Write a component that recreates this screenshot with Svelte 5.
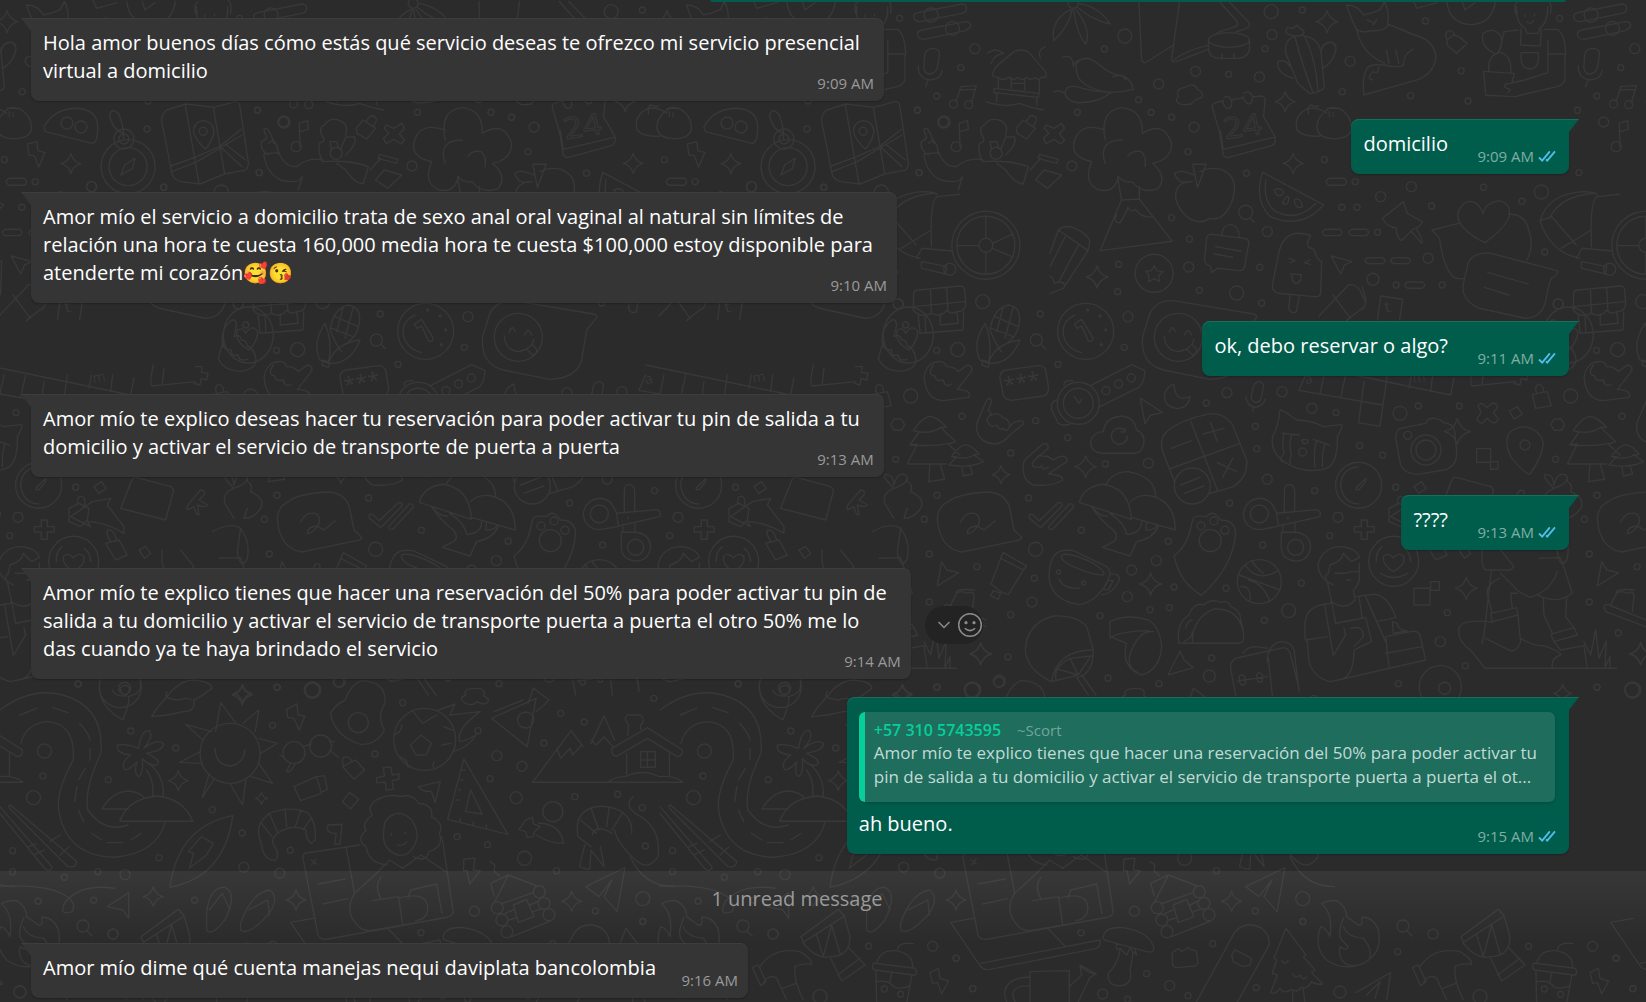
<script lang="ts">
    type Message = {
        id: number;
        out?: boolean;
        lines: string[];
        time: string;
        quote?: { phone: string; name: string; text: string };
        hovered?: boolean;
    };

    type Word = { x: number; y: number; size: number; text: string; outline?: boolean };

    type Sheet = {
        x: number;
        y: number;
        sx: number;
        sy: number;
        dots: number[][];
        stars: number[][];
        paths: string[];
        words?: Word[];
    };

    const messages: Message[] = [
        {
            id: 1,
            lines: [
                "Hola amor buenos días cómo estás qué servicio deseas te ofrezco mi servicio presencial",
                "virtual a domicilio",
            ],
            time: "9:09 AM",
        },
        { id: 2, out: true, lines: ["domicilio"], time: "9:09 AM" },
        {
            id: 3,
            lines: [
                "Amor mío el servicio a domicilio trata de sexo anal oral vaginal al natural sin límites de",
                "relación una hora te cuesta 160,000 media hora te cuesta $100,000 estoy disponible para",
                "atenderte mi corazón🥰😘",
            ],
            time: "9:10 AM",
        },
        { id: 4, out: true, lines: ["ok, debo reservar o algo?"], time: "9:11 AM" },
        {
            id: 5,
            lines: [
                "Amor mío te explico deseas hacer tu reservación para poder activar tu pin de salida a tu",
                "domicilio y activar el servicio de transporte de puerta a puerta",
            ],
            time: "9:13 AM",
        },
        { id: 6, out: true, lines: ["????"], time: "9:13 AM" },
        {
            id: 7,
            lines: [
                "Amor mío te explico tienes que hacer una reservación del 50% para poder activar tu pin de",
                "salida a tu domicilio y activar el servicio de transporte puerta a puerta el otro 50% me lo",
                "das cuando ya te haya brindado el servicio",
            ],
            time: "9:14 AM",
            hovered: true,
        },
        {
            id: 8,
            out: true,
            lines: ["ah bueno."],
            time: "9:15 AM",
            quote: {
                phone: "+57 310 5743595",
                name: "~Scort",
                text: "Amor mío te explico tienes que hacer una reservación del 50% para poder activar tu\npin de salida a tu domicilio y activar el servicio de transporte puerta a puerta el ot...",
            },
        },
    ];

    const unread: Message[] = [
        {
            id: 9,
            lines: ["Amor mío dime qué cuenta manejas nequi daviplata bancolombia"],
            time: "9:16 AM",
        },
    ];

    // wallpaper repeats sideways
    const tileWidth = 660;
    const tiles = [-2, -1, 0, 1];

    const sheets: Sheet[] = [
        {
            x: 1050,
            y: 0,
            sx: 0.38,
            sy: 0.3333,
            dots: [[61,10,5],[143,147,3],[197,108,7],[582,35,7],[664,30,3],[584,104,5],[566,146,3],[790,184,5],[383,214,5],[470,223,3],[551,231,5],[286,252,5],[233,299,3],[769,275,3],[72,337,3],[266,337,3],[320,352,3],[379,382,5],[363,455,3],[517,520,3],[722,479,3],[803,545,3],[768,622,3],[808,622,3],[870,590,5],[951,560,5],[1004,618,3],[1141,562,3],[1293,576,7],[1242,604,3],[1392,518,3],[1457,366,5],[1388,331,3],[1439,288,3],[1502,203,3],[1539,146,5],[1341,55,3],[988,63,3],[1082,212,3],[949,287,3],[1100,303,3],[320,653,3],[367,717,3],[572,695,5],[862,697,3],[995,775,5],[850,838,6],[911,855,3],[1032,855,3],[552,802,3],[557,909,3],[181,793,3],[365,801,5],[178,875,3],[393,871,3],[491,879,7],[1302,756,3],[1337,912,5],[1424,45,7],[1480,85,7],[1483,312,4],[1523,314,4],[1490,440,5],[515,637,7],[274,820,19],[1473,808,6],[1568,736,34],[1568,736,29],[1568,736,7]],
            stars: [[729,65,11],[619,305,10],[640,490,10],[124,831,11]],
            paths: [
                "M55 28Q0 60 10 122Q50 80 58 30M62 30Q70 100 94 133Q110 90 68 28M72 22Q110 60 158 72Q130 20 75 10",
                "M234 4L241 180Q245 192 254 186L325 135M341 4L320 176Q320 190 334 184L416 148M445 4L493 65Q497 78 482 82L440 98M470 4L522 65Q530 78 515 86L490 96M325 180Q360 150 416 136",
                "M417 120A54 22 0 0 1 525 120A54 22 0 0 1 417 120V150Q420 175 450 175H495Q520 172 525 150V120M452 175V160M484 175V160",
                "M75 232Q60 190 80 180Q100 165 130 195Q160 225 192 228Q215 240 219 268Q150 290 100 258Q80 245 75 232M33 172Q60 160 62 200M62 200Q60 180 100 175M40 280Q40 255 70 260Q110 275 160 277Q130 310 70 308Q40 300 40 280M10 276Q25 268 40 280M165 230Q195 220 198 240",
                "M345 313Q325 305 338 288Q330 265 355 262Q380 245 388 268Q405 275 400 293Q375 300 372 312Q355 315 345 313",
                "M455 303L437 308Q425 312 427 322L447 400L455 460Q458 475 470 472L585 436Q595 430 592 410L562 350L566 300Q565 288 552 288L532 291M480 299L508 294M448 392L456 448L590 412M458 292Q470 285 477 300Q482 325 468 326Q455 320 455 300M510 280Q525 270 532 287Q535 312 522 312Q510 305 508 290",
                "M650 390Q640 345 680 325H700Q720 330 728 340M650 390Q665 412 710 408M735 325H760Q795 345 793 390Q785 418 745 416Q705 415 702 380Q705 345 735 325M678 325L685 315L700 320L706 318M730 325L745 322L758 325M735 335V350M745 338V350M680 328V342",
                "M652 250L620 158Q615 110 660 106Q715 110 715 180L722 262Q715 275 684 281L652 250M644 108Q665 200 692 278M670 108Q700 180 705 270M648 108Q610 105 625 82Q640 90 650 75Q660 90 668 92Q670 105 655 108M715 150Q715 130 740 126Q760 135 748 165Q740 190 718 205M640 235Q595 220 600 185Q620 175 632 200",
                "M880 190Q820 160 808 92L795 60L780 15Q810 15 825 45Q850 40 870 28L880 4Q895 40 888 72L960 105Q1010 120 1016 170Q1010 230 950 245L826 285Q820 230 835 203Q850 190 880 195Q920 205 930 195Q930 160 955 148M808 90Q825 100 845 92Q870 95 890 78M850 240Q830 235 850 215Q865 225 865 200M918 190L910 150M835 60L850 68M860 58L850 75M885 150L892 190",
                "M1045 120L1062 105L1078 112L1098 130L1070 160L1045 135ZM1045 120Q1035 100 1050 92Q1060 92 1065 104",
                "M1044 4Q1050 70 1108 74Q1165 70 1172 4M1085 4L1092 30L1118 8M955 0L965 25L1018 8",
                "M1228 20Q1225 70 1250 85L1255 100H1285L1288 85Q1310 70 1310 20M1225 40Q1220 10 1232 5M1317 40Q1322 10 1310 0M1240 85L1238 135L1290 138L1293 88M1232 90L1195 95L1183 150M1300 88H1335Q1355 100 1357 162L1310 162M1355 165V240Q1350 255 1335 260L1250 282L1225 290L1147 286L1141 214L1222 220L1215 250M1310 120V218L1250 240L1200 252Q1190 265 1212 268L1205 278M1240 158L1285 158Q1290 205 1262 207Q1235 205 1240 158M1155 214Q1150 165 1185 157Q1215 165 1213 218M1170 160Q1130 140 1140 100Q1165 80 1185 105Q1195 130 1180 155M1250 45V50M1275 42V48M1255 65Q1265 75 1273 62",
                "M1378 50Q1378 40 1390 38L1505 12Q1520 12 1517 28Q1515 38 1505 40L1395 65Q1380 65 1378 50M1388 105Q1388 92 1400 90L1515 65Q1530 65 1528 80L1515 92L1405 118Q1390 118 1388 105",
                "M1407 165Q1410 145 1430 145Q1448 148 1446 165L1440 205Q1435 222 1418 222Q1405 218 1405 200ZM1390 198Q1390 235 1420 240Q1450 238 1453 212M1415 242L1410 260",
                "M1490 305L1502 260L1543 257L1530 308M1500 270L1541 268M1500 440L1498 370L1520 362L1522 388L1500 395",
                "M145 420Q130 330 190 323Q245 330 243 400Q300 360 320 430Q320 480 270 490Q310 530 285 565Q245 585 215 545Q195 550 180 530Q170 580 130 570Q85 550 110 485Q50 470 65 420Q80 365 145 390M145 490Q125 420 190 420M205 470Q215 450 240 455Q255 470 250 500",
                "M178 530L188 600L132 752L322 724L235 597V560M188 600L235 597M175 645Q165 670 185 668Q200 640 205 622Q215 640 225 628Q240 655 272 650",
                "M395 515Q420 500 450 508Q500 530 480 600Q460 665 420 655Q390 680 355 645Q320 600 335 565Q345 545 375 545M328 522Q340 505 378 525M328 522Q340 555 365 545M376 493H411L388 563Z",
                "M560 517Q535 600 580 650Q660 690 720 615L560 517M568 540Q560 600 590 632Q650 670 700 610M590 570Q610 560 615 578Q600 600 590 570M612 610Q620 585 628 590Q630 620 612 610M643 600Q660 590 665 620Q645 630 643 600",
                "M735 535H775Q785 545 775 556H735Q718 545 735 535M725 688H762Q775 697 762 707H725Q708 697 725 688M795 688H832Q845 697 832 707H795Q778 697 795 688M838 773H875Q888 782 875 791H838Q820 782 838 773M905 773H942Q955 782 942 791H905Q888 782 905 773M942 846H980Q992 855 980 865H942Q925 855 942 846",
                "M425 703L515 716Q524 720 523 730L512 800Q510 812 500 812L440 805L425 817L422 798Q408 795 407 780L412 715Q415 703 425 703M452 703Q455 672 478 674Q498 680 498 713M436 740L502 754M432 762L480 772M526 655L538 667",
                "M600 770Q610 700 655 700Q680 702 686 708Q670 735 685 745Q695 740 698 760Q705 780 715 785L712 880Q710 892 695 890L600 880Q585 875 585 855ZM632 885L628 925Q632 942 648 936L656 890M630 775L645 782L632 788M685 780L670 788L685 793M632 822L662 824M637 824Q635 850 650 850Q662 845 660 826",
                "M740 768L795 785L775 795L765 822Z",
                "M274 797L281 812L298 815L286 827L288 845L274 836L260 845L260 826L252 814L267 812Z",
                "M0 760L22 690Q35 675 60 682Q100 700 105 725L100 752L35 865L0 880M22 690L100 752M0 800L40 710M22 848L75 735M0 828Q10 835 12 850Q30 840 40 855",
                "M1140 640Q1120 590 1090 610Q1060 640 1085 680Q1110 710 1145 728Q1190 690 1205 660Q1220 610 1180 602Q1145 610 1140 640M1075 670L1005 690L1025 715Q1035 800 1060 830Q1075 840 1088 835M1207 643Q1250 640 1260 690Q1275 740 1255 780M1100 790Q1115 755 1160 760L1335 812Q1340 822 1320 835Q1310 860 1305 900Q1295 955 1250 955L1130 925Q1080 900 1088 850ZM1152 817L1258 852M1143 862L1208 885",
                "M875 655L930 605L940 640L980 665Q975 680 955 688L925 722Q910 710 912 685Q885 680 875 655M950 693L978 730Q985 725 965 688",
                "M708 948L785 855Q800 850 815 870L830 905Q830 925 815 930L780 962M822 862L832 900M745 885L790 955M862 960L870 888L928 898L920 960",
                "M1290 662Q1310 580 1405 575Q1430 575 1440 583M1315 655Q1340 590 1430 580M1425 740Q1420 600 1440 590L1500 583M1345 745L1420 693M1290 662L1320 650L1385 735M1290 665Q1320 760 1395 775M1385 775L1400 745L1480 753M1400 785L1465 800L1462 822L1400 805Q1395 795 1400 785M1568 714V650M1568 757V822M1549 737H1492M1585 730L1640 702M1585 745L1640 772",
                "M1378 880Q1378 870 1390 870L1500 858Q1512 858 1512 870L1515 910Q1515 935 1492 935Q1475 945 1465 930Q1450 955 1425 940Q1395 955 1377 930ZM1378 920L1512 905M1422 868L1425 940M1465 863L1468 930M1390 945L1395 1000L1508 990L1510 935M1408 947L1410 998M1448 942V975L1495 970L1492 938",
            ],
            words: [
                { x: 462, y: 418, size: 88, text: "24", outline: true },
                { x: 882, y: 938, size: 48, text: "t" },
            ],
        },
        {
            x: 0,
            y: 0,
            sx: 0.3509,
            sy: 0.3333,
            dots: [[365,500,27],[365,500,19],[353,417,5],[353,417,10],[191,369,6],[231,381,6],[579,394,4],[958,460,6],[419,387,3],[809,366,6],[734,331,3],[739,518,3],[261,560,5],[467,562,3],[1174,498,5]],
            stars: [[202,491,10]],
            paths: [
                "M350 400Q320 390 312 345Q320 320 340 345Q355 390 352 415M345 525L355 495L385 475L378 505Z",
                "M475 330L530 312L610 322L670 305Q680 305 683 315L708 490Q705 515 690 512L640 522L570 552L515 545Q495 540 490 520L460 360Q462 340 475 330M528 314L567 550M608 322L640 520M488 498L560 470L625 440L688 388M490 515L562 485L690 405M628 440L690 500M645 435L700 480M585 447Q548 410 552 385Q560 362 580 362Q608 365 610 395Q605 425 585 447",
                "M125 382Q150 330 210 325Q275 325 278 375Q280 430 262 430L130 395Z",
                "M78 432L105 425L108 452L128 458L110 502L98 467L82 465Z",
                "M765 465Q740 450 745 425L760 415L752 390Q758 375 770 400L778 420Q795 440 792 462M765 430Q780 415 780 430M752 462L795 458Q810 500 845 500Q880 470 920 480M752 465Q760 520 800 540Q840 550 855 540L862 530L850 570M920 485Q905 460 910 430Q930 425 920 410Q905 385 925 375Q940 350 970 362Q995 375 985 405M1050 500Q1000 480 920 485M960 490L985 510Q1010 550 1035 552L1050 500M945 450L940 425L960 425L965 445M970 450L985 412L1010 410Q1020 430 985 465",
                "M1100 375L1123 385L1145 370L1153 385L1138 402L1153 420L1143 432L1123 418L1100 430L1093 415L1108 400L1095 385Z",
                "M1015 385L1035 360L1070 385L1045 417L1018 400ZM1045 362L1055 348Q1070 345 1073 360L1065 378",
                "M1082 463L1135 478L1130 490L1078 475ZM1055 510L1085 475M1070 540L1095 510L1145 525L1105 565Z",
            ],
        },
        {
            x: 500,
            y: 0,
            sx: 0.3509,
            sy: 0.3333,
            dots: [],
            stars: [],
            paths: [
                "M1405 230Q1400 210 1430 185L1465 155Q1485 145 1505 155L1555 215Q1560 240 1545 230Q1535 245 1525 232Q1515 245 1500 232Q1490 245 1475 232Q1460 245 1450 232Q1430 245 1420 232ZM1408 265L1535 280V292L1408 278ZM1420 235V265M1537 240V280M1415 282V305M1530 292V315M1390 160Q1410 140 1435 160Q1405 165 1400 190M1540 175Q1530 150 1555 140M1385 305Q1440 325 1480 310Q1520 325 1550 330M1457 230V265M1495 235V270M1457 250H1495",
            ],
        },
        {
            x: 880,
            y: 300,
            sx: 0.3333,
            sy: 0.3333,
            dots: [[55,12,5],[481,42,3],[744,50,5],[308,5,7],[77,75,3],[170,151,3],[233,149,7],[534,193,3],[733,142,3],[92,288,7],[246,349,3],[467,362,3],[563,413,3],[47,478,3],[392,459,3],[676,492,3],[805,490,5],[171,586,3],[446,594,3],[133,658,3],[604,691,3],[467,748,7],[148,762,3],[291,800,3],[463,835,3],[456,906,5],[148,906,3],[829,782,5],[755,810,5],[742,890,5],[865,724,3],[882,861,3],[979,309,3],[1041,278,5],[1206,275,5],[1126,379,3],[1130,446,3],[1296,325,5],[1368,338,3],[1439,437,3],[1508,466,3],[1162,538,5],[1304,572,3],[1049,609,3],[1374,652,5],[1349,707,3],[1148,735,3],[1264,849,3],[1038,865,3],[1226,932,7],[810,929,3],[868,923,3],[392,944,3],[660,947,3],[469,120,6],[617,94,28],[895,112,24],[595,310,21],[595,310,15],[678,272,4],[716,252,4],[754,234,4],[1268,456,4],[937,558,18],[536,816,2],[611,849,2],[991,722,11],[963,678,4],[1002,663,4],[1035,691,4],[1138,642,9],[1247,742,8],[1138,845,22],[1436,556,23],[623,30,1],[660,48,1],[677,90,1],[664,134,1]],
            stars: [[617,500,11],[363,524,9],[812,852,11]],
            paths: [
                "M8 140Q0 90 30 65Q45 50 50 75L42 110Q60 100 65 120Q80 120 82 138Q105 145 108 180Q105 210 60 214Q10 212 -5 175L8 130M12 125Q5 150 35 150Q30 170 55 165Q55 185 82 178",
                "M135 250Q125 215 155 190Q190 175 200 200Q225 200 235 215L262 195Q285 200 270 220L232 268Q275 270 268 292L190 302Q145 300 135 250M160 195Q140 225 165 228Q165 245 190 240Q195 265 215 252",
                "M330 90Q340 25 385 15Q425 20 418 70Q410 110 385 125M330 90Q350 140 365 155M315 70Q275 130 300 180L325 190Q340 130 315 70M325 190Q345 130 420 120Q390 195 325 190M308 180L330 188L325 202L306 195ZM345 50L415 80M335 85L400 110M370 20L350 95M400 20L375 115M482 132L496 146",
                "M583 72L605 58L640 115Q635 130 625 122L605 78L592 85ZM585 45Q550 60 549 94Q552 145 605 158",
                "M810 40Q830 0 880 2L1120 42Q1135 45 1128 55L1100 90L1085 180Q1070 235 990 238L850 210Q780 190 788 110ZM868 98Q875 70 886 95M914 105Q925 78 935 105M853 108Q855 150 895 155Q935 148 942 118M920 148L938 165Q955 160 948 145L938 135",
                "M378 210L475 197Q495 197 498 215L506 265Q505 285 490 288L395 301Q375 300 370 285L360 235Q358 215 378 210",
                "M583 290L597 310L605 298M630 258L755 194L795 212L792 235Q785 260 770 265L655 322M552 255Q550 240 580 242M530 300Q510 305 515 330L535 370Q550 380 570 372",
                "M781 294L848 338L812 345L795 372Z",
                "M882 252Q885 310 930 290Q925 325 890 326Q855 320 853 290Q855 262 882 252",
                "M1120 260Q1125 245 1138 245Q1152 248 1150 262L1143 298Q1138 308 1125 307Q1112 300 1114 290ZM1098 290Q1100 318 1125 322Q1150 318 1156 298M1122 322L1118 334",
                "M1200 330Q1210 330 1250 360Q1300 362 1330 380L1385 374Q1390 380 1372 410Q1375 500 1330 508Q1270 520 1220 490Q1170 460 1178 410Q1195 380 1200 330M1207 400L1258 405M1300 418L1348 435M1212 402Q1205 430 1212 460Q1200 475 1205 485M1235 405Q1225 440 1235 465Q1225 480 1232 490M1310 422Q1300 450 1305 500M1335 430Q1325 460 1328 500M1265 420Q1285 415 1285 425Q1270 440 1265 420",
                "M860 395Q900 360 990 341Q1040 340 1060 380L1100 480Q1105 530 1060 560L985 582M860 395Q835 420 850 460L885 550M933 365L1012 570M868 507L1080 430M873 445L935 422M970 402L1032 385M992 368L1012 425M1012 488L1070 515M1058 475L1028 532M902 555L960 532M912 580L972 558",
                "M665 460Q630 455 632 425Q640 395 670 395Q675 350 730 348Q765 355 770 390Q795 400 792 430Q785 458 765 460ZM733 390A24 24 0 1 0 742 408M735 385V396H722",
                "M145 350Q165 345 200 382L182 382Q205 405 227 425L205 432L240 465M145 350Q120 360 100 392L117 396L90 435L112 432L82 492H200M100 392Q150 405 182 382M90 435Q160 440 205 430M150 492L146 545L194 538L180 492M255 434Q275 435 297 462L282 465L311 485Q270 505 207 495L230 470L214 470Q235 440 255 434M246 500L250 528L278 522L270 498M214 470Q260 480 282 465",
                "M32 374L43 357H64L74 374L64 391H43Z",
                "M292 365Q290 375 290 390Q300 432 350 432Q375 425 390 405L430 372Q435 355 400 368L390 378Q385 355 370 355Q355 335 335 345L325 330L335 305Q330 285 318 305ZM335 345Q315 350 325 370Q335 385 350 375Q360 395 370 385Q380 400 388 380",
                "M430 495Q425 540 460 555Q520 560 548 540Q550 525 505 522L560 485Q565 465 540 470L518 480Q505 465 490 470Q475 460 470 475L505 445Q505 425 488 432L445 470Q430 480 430 495M470 475Q450 490 460 500Q480 505 485 498Q490 515 505 500",
                "M598 607Q610 560 670 553Q750 565 754 658ZM678 553Q700 515 745 515Q825 530 827 588M752 605Q775 580 815 588Q885 605 886 690L754 652M635 620Q660 660 700 690Q715 705 705 722L668 742L750 768L770 725Q820 715 835 680M690 640Q735 670 740 703Q785 700 785 665M640 625Q660 650 682 648M800 668Q795 695 800 690Q830 690 830 675",
                "M205 605Q230 582 325 576Q375 580 388 620L402 690L425 712Q425 720 410 722L245 756Q180 745 172 660Q172 620 205 605M241 668Q255 635 285 640Q305 650 295 675Q275 705 262 700Q262 680 290 678L312 690L345 663",
                "M448 645Q455 638 463 648L478 662L535 608Q548 605 546 618L482 683L448 655ZM506 680L568 612Q582 610 580 622L518 688Q505 690 506 680",
                "M518 775Q530 745 580 752L680 800Q695 815 688 830Q660 900 600 914Q520 905 508 840Q505 800 518 775M545 765Q570 755 640 790Q680 815 670 825Q630 825 560 790Q540 775 545 765M690 822Q720 820 718 840Q700 880 665 885M680 850Q680 840 700 842L685 868Q670 872 672 862ZM538 838Q550 868 597 865",
                "M370 758L440 798L430 810L385 885L362 875L333 852L362 775ZM362 775L430 810M340 872L362 880L355 898L332 888Z",
                "M185 785L200 810L236 818L172 858Z",
                "M940 655Q945 645 980 650Q1000 625 1022 660Q1065 660 1067 700Q1060 800 965 886Q900 850 882 768Q925 735 935 670Z",
                "M1190 640L1310 629Q1325 632 1320 650L1195 678ZM1213 638V570Q1215 552 1230 554Q1245 558 1244 575V635M1209 672V697M1245 668V697M1204 697H1245Q1290 700 1292 742Q1285 783 1247 783Q1205 780 1204 742ZM1190 640Q1175 595 1138 595Q1095 600 1090 642Q1095 688 1140 689L1192 680M1224 652V657",
                "M1077 825L1200 870M1095 795Q1130 850 1195 812M1115 782Q1125 800 1150 820M1110 905Q1115 855 1082 860M1170 905Q1150 850 1105 840",
                "M1436 500Q1385 505 1382 556Q1390 610 1436 612M1428 565L1458 535Q1460 545 1438 568Q1428 572 1428 565",
                "M1444 660H1462V680H1483V696H1462V718H1444V696H1423V680H1444Z",
                "M1360 855Q1310 830 1315 790Q1330 740 1385 740Q1430 745 1438 772L1415 785L1390 760Q1385 785 1350 795L1345 820Q1330 830 1342 845L1355 905M1438 790V840Q1430 865 1420 870L1425 900Q1400 930 1365 912L1352 905M1365 820H1395L1415 815H1440M1400 840H1412",
            ],
            words: [{ x: 376, y: 280, size: 66, text: "***" }],
        },
        {
            x: 1124,
            y: 375,
            sx: 0.3333,
            sy: 0.3333,
            dots: [[883,93,3],[828,115,7],[1006,93,3],[815,337,3],[970,713,3],[949,800,5],[1024,872,3],[1483,774,3],[263,849,3],[256,903,6],[105,926,3],[421,736,3],[823,926,3],[1419,937,3],[1525,945,7],[809,559,25],[906,225,15],[906,225,10],[851,181,4],[1203,210,5],[949,935,21],[962,940,6]],
            stars: [[1000,170,13],[1027,640,11],[1550,837,11]],
            paths: [
                "M525 46L545 0M525 46L775 90M600 0L588 56M665 0L650 68M720 20L704 143L768 154L790 0M545 -30L980 60L990 8M855 40L862 0M920 50L926 0",
                "M1048 -30Q1035 30 1045 33L1175 20M1075 25L1080 -20M1175 -25L1195 -25L1192 -8L1212 -5L1208 15L1192 10L1188 30L1170 25",
                "M1258 -120A75 84 0 1 0 1408 -120A75 84 0 1 0 1258 -120M1335 -75Q1290 -100 1300 -135Q1318 -145 1325 -125Q1345 -155 1362 -130Q1360 -100 1335 -75",
                "M545 740Q545 690 625 685M543 790L550 800L555 860Q570 910 620 920L655 912L905 855L888 780Q880 765 860 770L785 785L795 875M543 790V740M815 725Q790 660 750 658L695 665M602 690L628 842L665 780L660 758M625 690L635 745L715 730L705 665M725 665L785 800M545 795L610 785M665 740L725 728L743 800L690 825Q690 900 655 912M680 760Q720 750 718 785L690 815M785 835L895 815M758 740L815 728M805 740L808 775L850 768Q820 765 820 745Z",
                "M808 590Q775 570 778 545Q790 530 808 548Q825 530 840 545Q845 570 808 590M775 515Q755 530 757 560M860 560Q858 530 840 520M770 595Q810 620 850 595",
                "M830 160L905 145Q910 128 935 130Q955 135 958 143Q990 145 992 170L998 230Q1000 275 960 285L880 298Q840 295 830 270L815 190Q815 165 830 160",
                "M1218 297Q1205 300 1160 245Q1140 200 1155 175Q1175 155 1203 155Q1250 165 1258 205Q1255 245 1218 297",
                "M1058 221H1100V262H1058ZM1100 260H1122V283H1100ZM870 640H918V690H870ZM920 620H946V646H920Z",
                "M1062 92Q1070 80 1080 90L1090 97L1105 84Q1120 85 1120 98L1108 113L1122 130Q1120 145 1105 143L1090 130L1075 145Q1058 142 1060 128L1072 113Z",
                "M1156 108L1180 95L1195 118L1170 132ZM870 335L893 320L907 340L885 355Z",
                "M985 312Q990 305 1000 308L1100 335Q1110 340 1108 350L1085 435L950 400ZM960 455L910 390L920 370L865 380L800 425L860 455L850 440Q900 440 960 475Z",
                "M795 400L825 385L855 400L850 435L830 455L795 440ZM820 385Q820 360 835 365Q845 370 842 390M905 505L945 495L970 540L935 555ZM920 500Q900 465 915 465Q930 465 938 495M1005 525L1025 515L1040 535L1022 550Z",
                "M1160 380L1190 345Q1205 345 1200 360L1185 375L1210 390Q1205 400 1180 390L1185 420Q1175 420 1170 395L1150 405Q1145 395 1160 380M1290 340Q1250 300 1265 298Q1290 300 1290 330Q1300 290 1325 300Q1345 320 1290 340Q1250 355 1265 390L1290 430M1325 315Q1350 330 1340 350Q1385 370 1370 400Q1350 430 1320 430L1330 400M1225 470Q1280 440 1310 460Q1340 500 1330 550Q1310 590 1300 530L1310 460",
                "M1225 58L1270 50L1282 92L1235 100ZM1238 56Q1230 30 1245 28Q1260 30 1258 52",
                "M165 805Q155 745 195 720Q210 680 240 690Q260 670 290 682Q315 675 320 695Q350 705 350 735Q365 790 355 800L345 805ZM205 800Q205 730 270 702Q345 700 357 770M180 800Q205 790 205 770M185 760Q190 735 205 735",
                "M168 828L180 855L208 878L132 900Z",
                "M335 850L480 818Q495 820 500 840L525 940M335 850Q318 860 320 880L335 960M430 860Q430 810 470 800Q510 800 512 840L525 950M433 850L445 960M357 835Q370 815 395 815L430 820M340 918L430 905M345 905Q355 895 362 905L365 925Q355 935 348 925ZM398 900Q405 885 415 900V920Q405 925 400 915Z",
                "M1075 525Q1070 585 1090 585H1160L1170 575L1130 525M1130 595L1185 650L1218 667Q1280 650 1300 590M1245 550L1310 548L1345 655Q1300 690 1240 660M1102 590L1080 780L1074 805M1125 610Q1085 630 1090 660L1105 715M1180 655L1160 655L1165 700M1100 715L1178 698L1182 720L1105 740ZM1182 720L1190 800Q1180 830 1160 828L1085 790M1105 742Q1015 730 1005 760Q1000 800 1040 825L1083 880H1478M1190 790Q1230 815 1260 812Q1310 830 1310 840Q1280 850 1285 880M1258 670L1260 720L1285 775M1328 670L1325 725L1350 758M1280 778L1350 758L1360 780L1290 800ZM1290 800L1310 825L1380 812L1390 880M1380 800L1400 840L1415 765L1425 850L1447 798L1443 878L1458 845V880",
                "M1440 695Q1445 685 1455 690L1566 735M1440 695Q1440 705 1450 712L1566 755M1460 690L1478 655Q1490 645 1510 655Q1530 645 1530 665L1525 710M1478 655Q1470 640 1532 645",
            ],
            words: [{ x: 545, y: 28, size: 42, text: "a" }, { x: 868, y: 24, size: 42, text: "m" }],
        },
        {
            x: 820,
            y: 560,
            sx: 0.3333,
            sy: 0.3333,
            dots: [[564,291,3],[538,364,6],[458,390,8],[351,382,3],[864,355,3]],
            stars: [[482,281,11],[248,400,9]],
            paths: [
                "M695 365Q620 330 616 270Q620 190 700 168Q770 165 800 200L820 270Q820 340 775 352M695 365Q710 270 820 270M708 360Q700 320 750 295L815 288M695 365L775 345L810 292M775 345L750 295M775 345L705 325M770 352L805 405M785 345L828 405",
                "M870 185Q920 160 985 180Q1020 200 1025 260Q1020 330 965 345Q900 320 920 250L870 230ZM870 235Q890 215 985 212M1000 215Q960 210 935 270Q915 320 950 335",
            ],
        },
        {
            x: 0,
            y: 680,
            sx: 0.523,
            sy: 0.3333,
            dots: [[149,12,3],[530,22,3],[597,30,8],[770,68,3],[648,6,5],[521,136,3],[250,153,3],[336,204,3],[85,213,7],[82,288,3],[207,299,3],[64,353,7],[717,222,3],[914,152,3],[950,227,5],[998,259,5],[937,296,3],[987,353,6],[1099,350,3],[1181,343,3],[1072,100,3],[1117,126,3],[1250,55,3],[1040,189,3],[406,389,3],[463,459,3],[555,511,3],[304,533,3],[24,512,3],[24,575,3],[187,575,3],[123,592,3],[239,584,5],[466,562,5],[535,580,5],[874,470,3],[932,494,3],[1003,535,7],[1228,383,3],[1064,572,3],[73,664,3],[179,661,3],[372,661,3],[907,694,5],[1229,656,7],[1234,498,3],[216,762,5],[805,758,3],[38,935,6],[1229,724,3],[440,220,30],[562,218,11],[613,198,11],[685,128,10],[812,178,31],[1005,120,8],[1057,395,10]],
            stars: [[463,45,10],[341,302,10],[500,355,6],[293,650,10],[566,660,10],[1093,664,10]],
            paths: [
                "M0 90Q60 20 120 45Q200 80 193 220Q160 330 168 390Q200 460 245 435M40 190Q50 130 90 125Q145 130 140 240Q105 340 113 400Q130 530 220 532Q300 520 316 425M38 105L70 85M100 82L130 98M152 130Q170 160 172 180M172 205V240M163 265L150 300M147 320L143 365M150 390L160 425M175 460L195 480M205 488H235M250 480L270 460",
                "M190 20Q190 80 235 120Q250 60 245 50Q275 40 268 0M215 30Q220 50 240 48Q255 25 240 15Q225 20 232 35M290 110L300 85L330 30Q350 0 370 0Q405 5 405 25Q380 55 370 60Q375 95 350 95L320 105ZM320 35Q310 55 340 60Q360 50 365 60",
                "M412 155L422 68L450 128M465 130L495 90L488 155M495 175L530 190L498 220M495 250L521 310L480 290M470 300L464 375L440 312M410 295L387 353L400 280M385 250L343 247L383 215M388 180L355 133L405 155M411 205Q412 255 440 258Q468 250 468 208",
                "M265 205Q270 150 285 152Q295 170 275 205Q300 175 312 190Q315 210 280 220Q310 240 300 255Q285 260 272 235Q275 280 265 290Q255 280 262 245Q240 280 237 265Q232 245 250 225Q220 220 225 195Q245 190 265 205",
                "M195 387Q215 335 245 333Q265 335 275 352M229 424Q245 355 300 348Q350 355 369 424ZM195 387H245M285 250Q315 290 312 350M280 270Q295 300 292 350",
                "M0 400L85 565Q95 580 100 562L0 380M20 375Q15 375 18 385L130 560Q145 565 147 545L20 375M55 500L70 490M65 525L85 510M95 485L115 465M115 525L132 500",
                "M445 407Q340 440 325 622Q430 590 445 407M385 470L408 490L395 525L362 565L370 520L360 515Z",
                "M548 88L568 72L570 105L583 108L572 150L562 115L550 112Z",
                "M580 200L595 192M555 250L548 275Q555 280 565 250M535 225L545 235M630 185H640M630 210L647 232",
                "M690 2Q740 5 736 70Q720 110 735 150Q720 195 690 193Q640 170 632 100Q640 75 660 60Q670 15 690 2",
                "M805 165L825 190L815 225H795L785 195ZM790 95L808 130L835 105M755 165Q770 150 768 135M848 140L865 150M845 195L862 190M765 230Q780 240 780 262M830 245Q825 260 830 262M835 92L870 72L860 105L918 95Q870 150 880 185Q895 180 910 165Q895 205 865 215",
                "M940 115L1025 55L1008 200ZM1010 70L1020 25L1050 60L1040 75L1025 95M945 95L1000 60",
                "M890 70Q875 55 890 45Q885 25 910 25Q930 25 925 48Q940 60 930 70Q920 75 912 65Q905 80 890 70",
                "M562 320L605 290L615 340L575 362ZM607 290L620 287L626 328L617 335M655 260L680 240L697 270L677 298ZM657 255Q650 235 662 230Q672 235 672 245",
                "M733 263L747 261L750 285L763 282V297L750 302L752 328L738 330L737 307L720 308V293L735 288ZM800 320L842 305L832 368L825 335Q805 335 800 320M655 365L668 337L686 358L670 387Z",
                "M887 237L856 418L971 463ZM900 330L890 395L922 402ZM885 270H890M880 300H885M876 330H881M872 360H877M880 425V415M905 435V425M930 445V435",
                "M1115 200L1092 152L1018 307H1306Q1290 285 1260 290Q1230 265 1195 290Q1175 290 1163 307M1130 190L1155 108L1175 180M1065 205L1072 235L1090 205L1095 225L1112 195M1130 180L1140 195L1155 170L1172 200M1170 205L1238 143L1305 210Q1305 230 1295 230L1238 175L1178 230Q1168 225 1170 205M1198 220V283M1280 220V290M1225 215H1253V262H1225ZM1238 215V262M1225 240H1253M1200 165L1202 135Q1190 115 1200 105H1225Q1235 120 1225 135V148",
                "M495 465Q490 430 515 400Q560 375 590 400Q605 430 603 480L595 490Q585 480 585 450Q560 430 530 460Q515 480 525 500Q535 520 528 540Q505 545 500 495ZM515 400L530 455M545 387L548 440M575 392L565 440M595 415L580 448M500 430L520 470M627 435L654 433L650 492H640L643 460Q622 462 627 435",
                "M720 360Q745 340 765 350Q790 340 800 370Q830 375 825 410Q850 430 840 460Q850 500 820 515Q815 550 790 530M720 360Q700 380 712 405Q690 430 700 450Q680 480 700 500Q705 550 740 555M735 430Q745 400 765 400Q795 410 798 470Q790 525 765 527Q735 515 733 470ZM748 465V460M775 462V457M760 495Q770 500 778 485",
                "M688 495L583 520Q577 530 580 540L608 765Q612 780 625 778L855 712Q868 708 866 690L845 470M662 505L678 640Q715 590 745 540L770 565L805 525L852 575M678 640Q655 700 690 745Q700 755 715 750L835 718M608 612L660 597M617 672L665 656M595 540L605 552M604 538L596 554M728 592Q715 620 728 655M712 662L762 650L770 735M762 655Q820 630 818 690Q815 720 795 722M780 655L785 630L835 612L845 700",
                "M1105 470Q1095 385 1150 378Q1210 385 1208 460M1105 470L1130 500M1130 385L1145 450M1165 380L1160 440M1190 400L1170 450M1110 420L1140 460M1132 465Q1140 430 1170 460M1118 495L1108 560Q1130 575 1128 560L1130 510L1155 560L1148 500M1210 350Q1190 380 1225 410Q1265 450 1258 530Q1240 575 1215 540Q1180 490 1175 450",
                "M1030 430Q1070 430 1078 490Q1050 490 1025 465M1005 420L1018 412L1020 432L1033 440L1022 455L1020 470L1008 472L1005 455L992 448L1000 432Z",
                "M887 537L908 535L905 570L918 573L898 612L893 572H886Z",
                "M0 618Q80 615 110 635Q150 660 138 695Q110 710 125 665Q155 610 220 625M1205 530Q1230 620 1290 620",
                "M205 680L246 638V715L235 690Z",
                "M1120 620L1195 563L1180 695L1155 650L1170 600L1145 650Z",
                "M395 700Q400 620 430 622Q455 640 430 720Q405 770 395 750ZM400 690L425 640L440 690M460 730Q480 640 515 630Q535 650 515 700Q475 770 460 750ZM475 690L512 660L515 705",
            ],
        },
        {
            x: 740,
            y: 840,
            sx: 0.3333,
            sy: 0.3333,
            dots: [[1252,203,6],[1266,240,6],[1281,275,6],[1378,155,6],[1392,190,6],[1407,224,6],[1220,401,3],[1289,437,5],[1344,467,3],[1163,478,3],[1088,462,5],[649,355,3],[699,446,3]],
            stars: [],
            paths: [
                "M700 235L632 247L722 380Q735 392 750 388L1070 325Q1085 315 1080 300L722 370M925 267L977 320",
                "M1285 105L1372 138M1285 105L1245 185M1262 192L1360 158M1285 105L1232 130L1243 168M1300 195L1340 178L1362 230L1315 247ZM1275 220L1300 210M1350 195L1378 182M1288 240L1312 232M1360 215L1388 205M1295 290L1412 243M1230 65L1245 75L1242 92L1258 108",
                "M1090 290Q1095 260 1150 263Q1230 275 1242 325Q1240 340 1220 335L1110 305Q1085 300 1090 290M1130 310Q1125 335 1140 325L1160 345L1170 325L1190 345L1185 325M1140 330Q1135 370 1105 400Q1100 440 1145 437Q1180 430 1170 390Q1180 350 1178 335",
                "M870 486V395L988 392V486M870 412Q800 410 793 460L800 486M870 438Q820 435 818 465L825 486M988 440L1025 405L1020 375L1069 402L1050 412L1015 486M1020 375Q1040 400 1069 402",
                "M1297 338L1315 325L1325 335L1345 322L1352 330Q1372 328 1370 340L1374 370L1365 378L1310 383Q1297 380 1297 370Z",
            ],
        },
        {
            x: 1200,
            y: 680,
            sx: 0.3333,
            sy: 0.3333,
            dots: [[593,815,3],[699,762,5],[308,725,3],[166,693,3],[38,791,3],[169,923,3],[420,936,6],[986,799,3],[1178,799,5],[1248,835,3],[1298,926,3],[840,950,7],[609,738,6],[1033,927,3],[1082,943,3]],
            stars: [],
            paths: [
                "M390 770Q380 745 362 740Q340 800 380 840Q430 875 490 850Q550 820 535 750Q520 710 485 712Q490 740 475 735Q440 710 440 710Q440 680 410 662Q380 660 365 672Q400 700 390 770M432 712Q410 760 425 780L445 800Q440 815 420 800Q410 850 460 858M430 740Q440 770 490 775Q520 810 508 838",
                "M637 862L655 855L678 905L662 917ZM660 860Q700 800 780 815Q815 835 815 852Q780 850 765 860Q760 900 790 960M672 905Q690 880 710 895L740 960M728 925L768 910",
                "M783 770L895 688L913 708L790 787ZM790 790Q830 840 870 830Q930 830 930 770L913 710M830 765L850 830L875 735L900 820M872 835L905 903L975 855L925 802M893 885L960 835M623 755L637 768",
                "M1000 850Q995 868 1005 870L1125 886Q1135 875 1125 865L1005 850ZM1010 850Q1020 810 1065 812Q1120 820 1118 862M1073 808Q1075 785 1120 791M1008 875L1010 970M1115 888L1100 970M1010 905Q1050 900 1060 920Q1080 930 1110 918M1055 880L1050 905",
                "M258 745L318 825L310 830L345 870L335 878L368 912Q345 915 335 905Q320 930 305 922Q290 940 275 928Q250 945 240 925Q225 945 212 938L232 885L217 880L230 840L222 835ZM245 840Q255 860 265 840M278 880Q285 900 300 885Q310 905 320 890M278 930V970M310 928L315 970",
                "M-10 965L105 755Q140 720 185 745Q215 770 205 800L110 970M95 825L105 810L155 835L150 855L130 860L100 845Z",
                "M467 938L572 878L560 960M500 945L540 905L525 955",
                "M1170 878L1195 865L1200 895L1226 903L1205 942L1193 908L1178 910Z",
            ],
        },
    ];

    function star(sheet: Sheet, x: number, y: number, r: number) {
        const a = r / sheet.sx;
        const b = r / sheet.sy;
        const c = a / 5;
        const d = b / 5;
        return `M${x} ${y - b}Q${x + c} ${y - d} ${x + a} ${y}Q${x + c} ${y + d} ${x} ${y + b}Q${x - c} ${y + d} ${x - a} ${y}Q${x - c} ${y - d} ${x} ${y - b}Z`;
    }

    // skip words that would start left of the window
    function wordsIn(sheet: Sheet, tile: number) {
        return (sheet.words ?? []).filter(
            (word) => tile < 1 && sheet.x + word.x * sheet.sx + tile * tileWidth > 0,
        );
    }
</script>

{#snippet bubble(message: Message)}
    <li class="row" class:out={message.out}>
        <div class="bubble" class:short={message.lines.length === 1}>
            {#if message.quote}
                <blockquote>
                    <p class="author"><b>{message.quote.phone}</b><span>{message.quote.name}</span></p>
                    <p>{message.quote.text}</p>
                </blockquote>
            {/if}
            <div class="text">
                {#each message.lines as line}
                    <p>{line}</p>
                {/each}
            </div>
            <div class="meta">
                <time>{message.time}</time>
                {#if message.out}
                    <svg width="18" height="12" viewBox="0 0 18 12" aria-label="Read">
                        <path d="M1 7.5L4.2 10.6L11.8 1.4M8 9.4L9.2 10.6L17 1.4" />
                    </svg>
                {/if}
            </div>
        </div>
        {#if message.hovered}
            <div class="actions">
                <button type="button" aria-label="Message options">
                    <svg width="14" height="8" viewBox="0 0 14 8"><path d="M1.5 1L7 6.5L12.5 1" /></svg>
                </button>
                <button type="button" aria-label="React">
                    <svg width="26" height="26" viewBox="0 0 26 26">
                        <circle cx="13" cy="13" r="11.3" />
                        <path d="M7.8 16.3Q13 21 18.2 16.3" />
                        <circle class="eye" cx="9" cy="10.7" r="1.6" />
                        <circle class="eye" cx="17" cy="10.7" r="1.6" />
                    </svg>
                </button>
            </div>
        {/if}
    </li>
{/snippet}

<main>
    <svg class="wallpaper" aria-hidden="true">
        {#each tiles as tile}
            <g transform="translate({tile * tileWidth} 0)">
                {#each sheets as sheet}
                    <g transform="translate({sheet.x} {sheet.y}) scale({sheet.sx} {sheet.sy})">
                        {#each sheet.paths as d}
                            <path {d} />
                        {/each}
                        {#each sheet.stars as [x, y, r]}
                            <path d={star(sheet, x, y, r)} />
                        {/each}
                        {#each sheet.dots as [x, y, r]}
                            <ellipse cx={x} cy={y} rx={r / sheet.sx} ry={r / sheet.sy} />
                        {/each}
                        {#each wordsIn(sheet, tile) as word}
                            <text
                                class:outline={word.outline}
                                x={word.x}
                                y={word.y}
                                font-size={word.size}
                                transform="rotate(-10 {word.x} {word.y})">{word.text}</text
                            >
                        {/each}
                    </g>
                {/each}
            </g>
        {/each}
    </svg>

    <div class="previous"></div>

    <ol>
        {#each messages as message (message.id)}
            {@render bubble(message)}
        {/each}
    </ol>

    <h2>1 unread message</h2>

    <ol>
        {#each unread as message (message.id)}
            {@render bubble(message)}
        {/each}
    </ol>
</main>

<style>
    :global(body) {
        background: #2b2b2b;
    }

    main {
        position: relative;
        min-height: 100vh;
        box-sizing: border-box;
        padding-bottom: 4px;
        overflow: hidden;
        color: #fff;
        font-family: "Open Sans", "Noto Sans", sans-serif;
        font-size: 20px;
        line-height: 28px;
    }

    .wallpaper {
        position: absolute;
        inset: 0;
        z-index: -1;
        width: 100%;
        height: 100%;
        fill: none;
        stroke: #383838;
        stroke-linecap: round;
        stroke-linejoin: round;
    }
    .wallpaper path,
    .wallpaper ellipse {
        vector-effect: non-scaling-stroke;
        stroke-width: 1.4px;
    }
    .wallpaper text {
        fill: #383838;
        stroke: none;
    }
    .wallpaper .outline {
        fill: none;
        stroke: #383838;
        stroke-width: 3px;
    }

    .previous {
        width: 52%;
        height: 2px;
        margin: 0 80px 16px auto;
        border-radius: 0 0 8px 8px;
        background: #005d4b;
    }

    ol {
        display: flex;
        flex-direction: column;
        gap: 18px;
        margin: 0;
        padding: 0 77px 0 31px;
        list-style: none;
    }

    p {
        margin: 0;
        white-space: pre;
    }

    .row {
        display: flex;
        align-items: center;
        gap: 14px;
    }
    .row.out {
        justify-content: flex-end;
    }

    .bubble {
        position: relative;
        display: flex;
        flex-direction: column;
        padding: 11px 10px 8px 12px;
        border-radius: 0 8px 8px 8px;
        background: #353535;
        box-shadow:
            inset 0 1px #3d3d3d,
            0 1px 2px #00000040;
    }
    .bubble::before {
        content: "";
        position: absolute;
        top: 0;
        left: -10px;
        width: 10px;
        height: 13px;
        background: linear-gradient(#3d3d3d 1px, #353535 1px);
        clip-path: polygon(0 0, 100% 0, 100% 100%);
    }

    .out .bubble {
        padding-right: 13px;
        border-radius: 8px 0 8px 8px;
        background: #005d4b;
        box-shadow:
            inset 0 1px #16705e,
            0 1px 2px #00000040;
    }
    .out .bubble::before {
        left: auto;
        right: -10px;
        background: linear-gradient(#16705e 1px, #005d4b 1px);
        clip-path: polygon(0 0, 100% 0, 0 100%);
    }

    .text {
        display: flex;
        flex-direction: column;
        align-items: flex-start;
        padding-right: 14px;
    }
    .short .text {
        padding-right: 82px;
    }
    .out .short .text {
        padding-right: 108px;
    }

    .meta {
        display: flex;
        align-items: center;
        align-self: flex-end;
        gap: 4px;
        margin-top: -12px;
        color: #9a9a9a;
        font-size: 15px;
        line-height: 20px;
    }
    .meta svg {
        fill: none;
        stroke: #53bdeb;
        stroke-width: 1.8px;
    }
    .out .meta {
        color: #80aea5;
    }

    blockquote {
        box-sizing: border-box;
        height: 90px;
        margin: 4px 1px 8px 0;
        padding: 7px 18px 5px 9px;
        border-left: 6px solid #06cf9c;
        border-radius: 6px;
        background: #1e6d5d;
        box-shadow: 0 1px 3px #00000033;
        color: #c3dad5;
        font-size: 17px;
        line-height: 24px;
    }
    .author {
        display: flex;
        gap: 16px;
        color: #74a59b;
        font-size: 15px;
        line-height: 22px;
    }
    .author b {
        color: #06cf9c;
        font-size: 16px;
        font-weight: 600;
    }

    .actions {
        display: flex;
        align-items: center;
        gap: 6px;
        margin-top: 2px;
        padding: 6px 0 6px 12px;
        border-radius: 19px;
        background: #232323;
    }
    button {
        display: flex;
        padding: 0;
        border: 0;
        background: none;
        cursor: pointer;
    }
    button svg {
        fill: none;
        stroke: #8c8c8c;
        stroke-width: 1.5px;
    }
    button .eye {
        fill: #8c8c8c;
        stroke: none;
    }

    h2 {
        box-sizing: border-box;
        height: 72px;
        margin: 17px 0 0;
        padding: 14px 52px 0 0;
        background: linear-gradient(#ffffff0f, #ffffff00);
        color: #9a9a9a;
        font-size: 20px;
        font-weight: 400;
        text-align: center;
    }
</style>
